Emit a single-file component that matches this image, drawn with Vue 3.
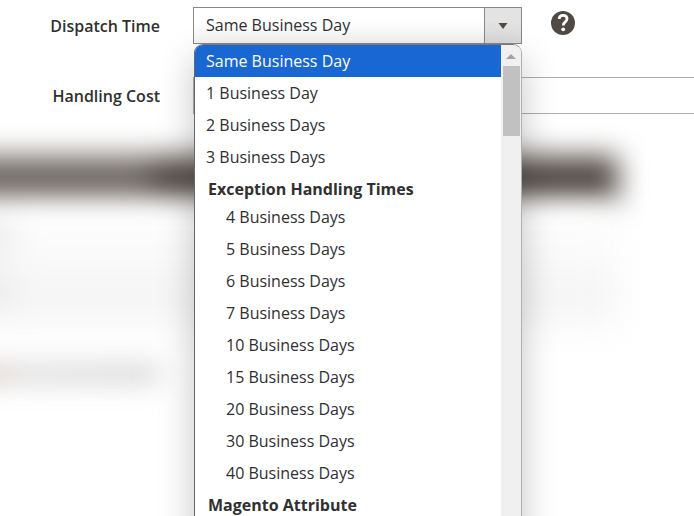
<script setup>
import { ref } from 'vue'

const dispatchTime = ref('Same Business Day')
const handlingCost = ref('')

const groups = [
  {
    label: '',
    options: ['Same Business Day', '1 Business Day', '2 Business Days', '3 Business Days'],
  },
  {
    label: 'Exception Handling Times',
    options: [
      '4 Business Days',
      '5 Business Days',
      '6 Business Days',
      '7 Business Days',
      '10 Business Days',
      '15 Business Days',
      '20 Business Days',
      '30 Business Days',
      '40 Business Days',
    ],
  },
  { label: 'Magento Attribute', options: [] },
]
</script>

<template>
  <main class="page">
    <form class="form" @submit.prevent>
      <div class="row">
        <label class="label" for="dispatch-time">Dispatch Time</label>
        <div class="control">
          <div class="dropdown">
            <select id="dispatch-time" v-model="dispatchTime" class="select">
              <option v-for="item in groups[0].options" :key="item">{{ item }}</option>
            </select>
            <span class="toggle" aria-hidden="true">
              <svg width="10" height="6" viewBox="0 0 10 6"><path d="M0.5 0h9L5 6z" fill="#514943" /></svg>
            </span>
            <div class="popup">
              <div class="options" role="listbox" aria-labelledby="dispatch-time">
                <div v-for="group in groups" :key="group.label" class="group" role="group">
                  <div v-if="group.label" class="group-label">{{ group.label }}</div>
                  <div
                    v-for="item in group.options"
                    :key="item"
                    class="option"
                    :class="{ nested: group.label, selected: item === dispatchTime }"
                    role="option"
                    :aria-selected="item === dispatchTime"
                    @click="dispatchTime = item"
                  >{{ item }}</div>
                </div>
              </div>
              <div class="scrollbar" aria-hidden="true">
                <svg class="scroll-up" width="10" height="5" viewBox="0 0 10 5"><path d="M5 0l5 5H0z" fill="#a3a3a3" /></svg>
                <div class="thumb"></div>
              </div>
            </div>
          </div>
          <svg class="help" width="24" height="24" viewBox="0 0 24 24" aria-hidden="true">
            <circle cx="12" cy="12" r="12" fill="#514943" />
            <path d="M8.2 8C8.3 5.5 9.9 4.3 12.1 4.3c2.3 0 3.9 1.3 3.9 3.4 0 1.6-.9 2.5-2 3.4-1.2.9-1.7 1.5-1.7 3.3" fill="none" stroke="#fff" stroke-width="2.8" />
            <circle cx="12.2" cy="18.3" r="1.9" fill="#fff" />
          </svg>
        </div>
      </div>
      <div class="row">
        <label class="label" for="handling-cost">Handling Cost</label>
        <input id="handling-cost" v-model="handlingCost" class="input" type="text" />
      </div>
    </form>

    <section class="obscured" aria-hidden="true">
      <div class="bar"><div class="bar-text"></div></div>
      <div class="lines">
        <div class="spot"></div>
        <div class="spot"></div>
      </div>
      <div class="caption"></div>
    </section>
  </main>
</template>

<style>
body {
  margin: 0;
  background: #fff;
}
</style>

<style scoped>
.page {
  height: 100vh;
  overflow: hidden;
  box-sizing: border-box;
  padding-top: 7px;
  font-family: 'Open Sans', 'Noto Sans', sans-serif;
  font-size: 16px;
  color: #303030;
}
.form {
  position: relative;
  z-index: 1;
  display: grid;
  gap: 33px;
}
.row {
  display: grid;
  grid-template-columns: 160px 1fr;
  column-gap: 33px;
}
.label {
  padding-top: 3px;
  line-height: 33px;
  font-weight: 600;
  text-align: right;
}
.control {
  display: flex;
  gap: 29px;
}
.dropdown {
  position: relative;
  display: flex;
  width: 329px;
  height: 37px;
}
.select {
  appearance: none;
  flex: 1;
  min-width: 0;
  height: 37px;
  padding: 0 12px 2px;
  border: 1px solid #8a8886;
  border-right: 0;
  border-radius: 0;
  background: linear-gradient(#fff 40%, #f4f4f4);
  color: #303030;
  font: inherit;
  font-weight: 400;
  outline: 0;
}
.toggle {
  display: flex;
  align-items: center;
  justify-content: center;
  box-sizing: border-box;
  width: 38px;
  border: 1px solid #8a8886;
  background: linear-gradient(#e3e3e3 40%, #dadada);
}
.help {
  margin-top: 4px;
}
.popup {
  position: absolute;
  top: 37px;
  left: 1px;
  right: 0;
  z-index: 2;
  display: flex;
  box-sizing: border-box;
  padding-bottom: 24px;
  border: 1px solid #b0b0b0;
  border-left-color: #686868;
  border-top-color: #77797c;
  border-radius: 9px 9px 0 0;
  overflow: hidden;
  background: #fff;
  box-shadow: 0 14px 36px rgba(0, 0, 0, 0.23);
}
.options {
  flex: 1;
}
.option {
  padding-left: 11px;
  line-height: 32px;
}
.nested {
  padding-left: 31px;
}
.selected {
  background: #1967d2;
  color: #fff;
}
.group-label {
  padding: 4px 0 0 13px;
  line-height: 24px;
  font-weight: 700;
}
.scrollbar {
  display: flex;
  flex-direction: column;
  align-items: center;
  gap: 7px;
  width: 20px;
  margin-bottom: -24px;
  padding-top: 9px;
  background: #f0f0f0;
}
.thumb {
  width: 17px;
  height: 70px;
  background: #c1c1c1;
}
.input {
  box-sizing: border-box;
  width: calc(100% + 12px);
  height: 37px;
  padding: 0 12px;
  border: 1px solid #adadad;
  background: transparent;
  font: inherit;
}
.obscured {
  padding-top: 42px;
}
.bar {
  height: 46px;
  margin: 0 76px 0 -60px;
  background: #514943;
  filter: blur(14px);
}
.bar-text {
  width: 210px;
  height: 46px;
  background: #706964;
}
.lines {
  display: flex;
  flex-direction: column;
  gap: 26px;
  box-sizing: border-box;
  height: 122px;
  margin: 6px 75px 0 -60px;
  padding-top: 14px;
  background: linear-gradient(#fff, #fafafa 40%, #f5f5f5 70%, #f9f9f9);
  filter: blur(16px);
}
.spot {
  width: 74px;
  height: 28px;
  background: #e8e8e8;
}
.caption {
  width: 220px;
  height: 20px;
  margin: 34px 0 0 -60px;
  background: linear-gradient(90deg, #dccfc9 60px, #dcdcdc 80px, #d6d6d6);
  filter: blur(13px);
}
</style>
